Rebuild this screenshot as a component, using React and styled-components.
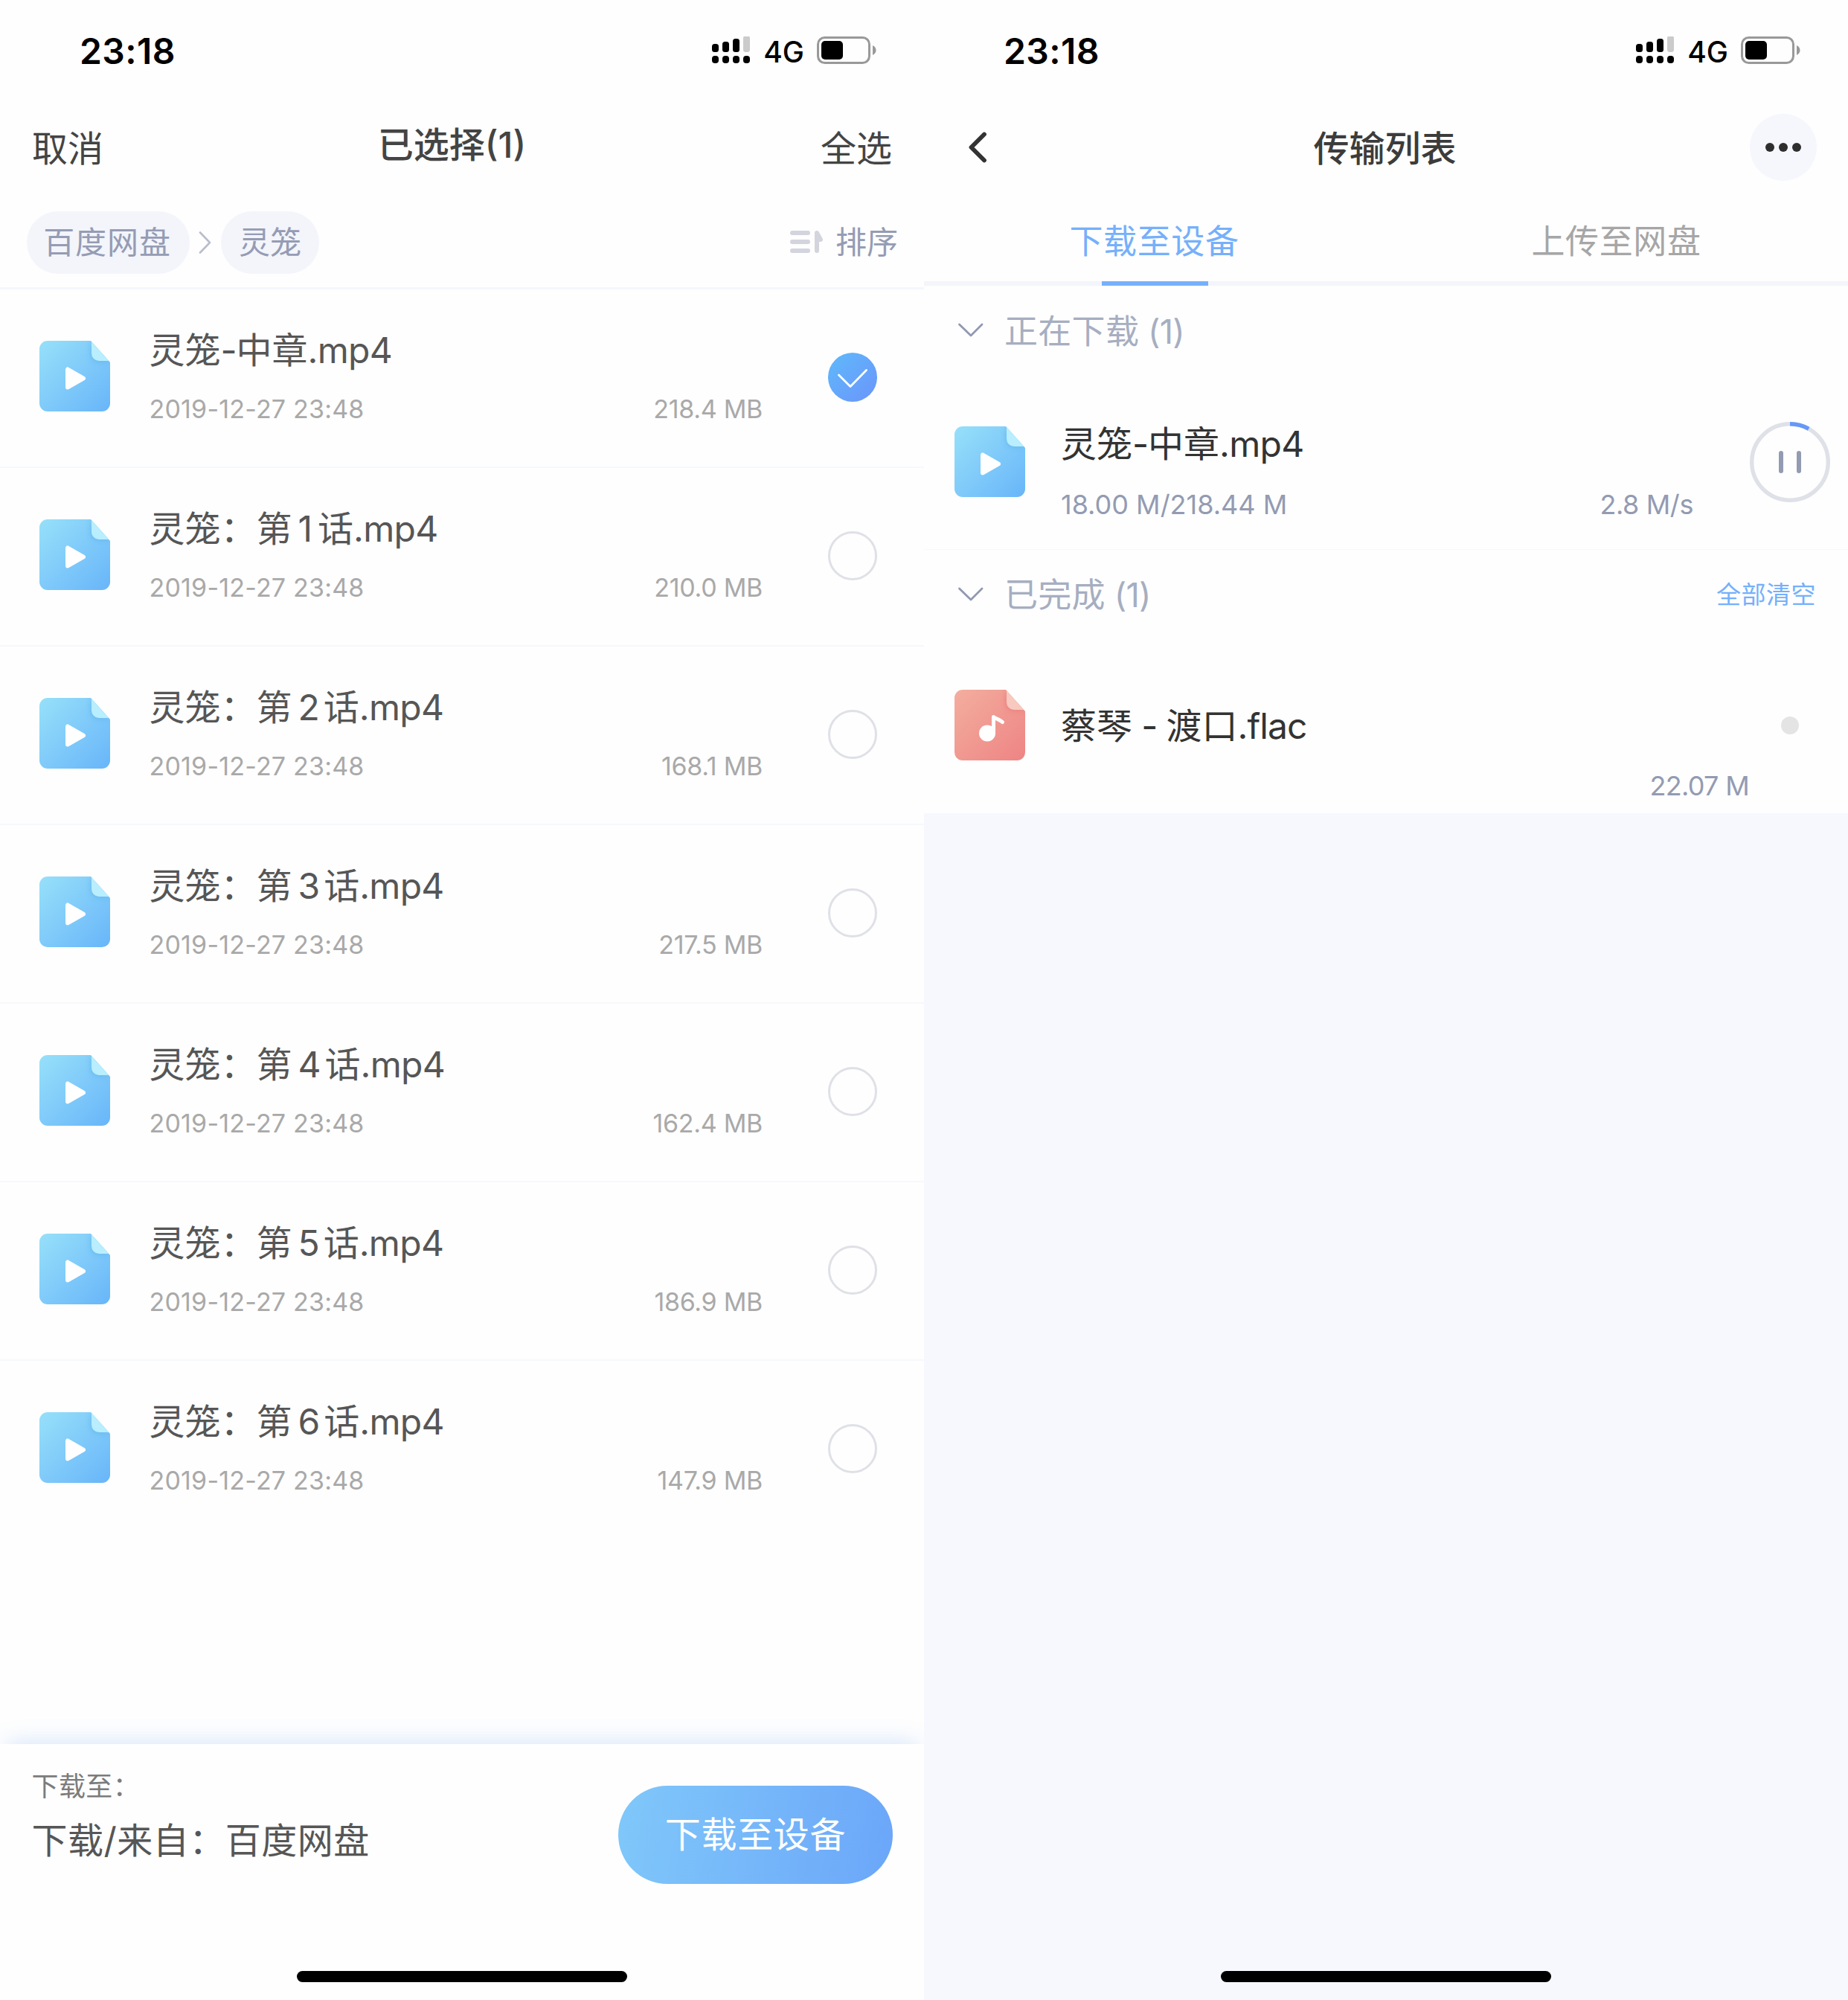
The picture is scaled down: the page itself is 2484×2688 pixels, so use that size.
import React from "react";
import styled, { createGlobalStyle } from "styled-components";

const Global = createGlobalStyle`
  * { box-sizing: border-box; }
  body { margin: 0; background: #fefefe; font-family: Inter, "Noto Sans CJK SC", sans-serif; }
  svg { display: block; flex: none; }
`;

const Screens = styled.div`
  display: flex;
  width: 2484px;
  height: 2688px;
`;
const Phone = styled.section`
  display: flex;
  flex-direction: column;
  width: 1242px;
  height: 2688px;
  overflow: hidden;
  background: ${(p) => p.$bg || "#fefefe"};
`;
const Text = styled.span`
  display: block;
  white-space: pre;
  padding: ${(p) => p.$pad || "0"};
  font-size: ${(p) => p.$size}px;
  line-height: ${(p) => p.$line || Math.round(p.$size * 1.25)}px;
  font-weight: ${(p) => p.$weight || 400};
  letter-spacing: ${(p) => p.$track || 0}px;
  color: ${(p) => p.$color};
`;
const Latin = styled.span`
  letter-spacing: ${(p) => p.$track}px;
`;

const StatusRow = styled.header`
  display: flex;
  justify-content: space-between;
  align-items: flex-start;
  height: 132px;
  padding: 49px 64px 0 107px;
`;
const StatusIcons = styled.div`
  display: flex;
`;
const Carrier = styled(Text)`
  margin: -2px 17px 0 18px;
`;

function StatusBar() {
  return (
    <StatusRow>
      <Text $size={48} $line={40} $weight={600} $track={0.4} $color="#000">23:18</Text>
      <StatusIcons>
        <svg width="51" height="38" viewBox="0 0 51 38">
          <rect x="0" y="10" width="9" height="11" rx="3.5" />
          <rect x="14" y="7" width="9" height="14" rx="3.5" />
          <rect x="28" y="3" width="9" height="18" rx="3.5" />
          <rect x="42" y="-1" width="9" height="22" rx="3.5" fill="#cbcbcb" />
          {[0, 14, 28, 42].map((x) => (
            <rect key={x} x={x} y="26" width="9" height="10" rx="4" />
          ))}
        </svg>
        <Carrier $size={39} $line={46} $weight={500} $color="#000">4G</Carrier>
        <svg width="80" height="40" viewBox="0 0 80 40">
          <rect x="1.5" y="1.5" width="69" height="34" rx="9" fill="none" stroke="#999" strokeWidth="3" />
          <rect x="6" y="6" width="29" height="25" rx="5" />
          <path d="M75 12c6 2.500 6 10.500 0 13z" fill="#999" />
        </svg>
      </StatusIcons>
    </StatusRow>
  );
}

const NavRow = styled.nav`
  display: grid;
  grid-template-columns: 1fr auto 1fr;
  align-items: center;
  height: 132px;
  padding: 0 42px 0 43px;
`;
const NavEnd = styled.div`
  justify-self: end;
`;
const BackSlot = styled.div`
  padding-left: 16px;
`;
const MoreButton = styled.button`
  display: flex;
  justify-content: center;
  align-items: center;
  gap: 6px;
  width: 90px;
  height: 90px;
  padding: 0;
  border: 0;
  border-radius: 50%;
  background: #f5f7fd;
`;
const MoreDot = styled.i`
  width: 12px;
  height: 12px;
  border-radius: 50%;
  background: #2e2e2e;
`;

const CrumbBar = styled.div`
  display: flex;
  align-items: flex-start;
  height: 125px;
  padding: 20px 35px 0 36px;
  border-bottom: 3px solid #f4f7fd;
`;
const Chip = styled.div`
  display: flex;
  align-items: center;
  justify-content: center;
  width: ${(p) => p.$w}px;
  height: 84px;
  border-radius: 42px;
  background: #f3f5fb;
`;
const CrumbArrow = styled.div`
  display: flex;
  justify-content: center;
  width: 42px;
  padding-top: 27px;
`;
const SortButton = styled.div`
  display: flex;
  align-items: center;
  gap: 16px;
  height: 82px;
  margin-left: auto;
`;

const FileRow = styled.article`
  display: flex;
  align-items: flex-start;
  height: 240px;
  padding: 69px 63px 0 53px;
  border-bottom: 2px solid ${(p) => (p.$last ? "transparent" : "#f6f8fd")};
`;
const FileBody = styled.div`
  flex: 1;
  margin: -17px 0 0 52.5px;
`;
const FileMeta = styled.div`
  display: flex;
  justify-content: space-between;
  margin-top: 27px;
  padding-right: 88px;
`;
const Episode = styled.span`
  margin: 0 ${(p) => (p.$narrow ? 7 : 5)}px 0 8px;
`;
const CheckSlot = styled.div`
  padding-top: 16px;
`;
const Radio = styled.div`
  width: 66px;
  height: 66px;
  border: 3px solid #dfe1e7;
  border-radius: 50%;
`;

const BottomBar = styled.footer`
  display: flex;
  flex-direction: column;
  height: 344px;
  margin-top: auto;
  background: #fefefe;
  box-shadow: 0 -10px 30px -10px rgba(70, 140, 240, 0.25);
`;
const BottomRow = styled.div`
  display: flex;
  justify-content: space-between;
  padding: 34px 42px 0 42.5px;
`;
const Target = styled.div`
  display: flex;
  flex-direction: column;
  gap: 20px;
`;
const DownloadButton = styled.button`
  display: flex;
  align-items: center;
  justify-content: center;
  width: 369px;
  height: 132px;
  margin-top: 22px;
  padding: 0;
  border: 0;
  border-radius: 66px;
  font-family: inherit;
  background: linear-gradient(100deg, #80c8fa, #6ba6f9);
`;
const HomeIndicator = styled.div`
  flex: none;
  width: 444px;
  height: 15px;
  margin: auto auto 24px;
  border-radius: 8px;
  background: #000;
`;

const Sheet = styled.div`
  flex: none;
  height: 1093px;
  background: #fefefe;
`;
const Tabs = styled.div`
  display: flex;
  height: 120px;
  border-bottom: 6px solid #f3f5fb;
`;
const Tab = styled.div`
  display: flex;
  flex: 1;
  flex-direction: column;
  align-items: center;
  justify-content: space-between;
  height: 120px;
  padding-top: 33px;
`;
const TabMarker = styled.div`
  width: 143px;
  height: 6px;
  background: #75b0fb;
`;
const SectionHead = styled.div`
  display: flex;
  align-items: center;
  height: 120px;
  padding: 0 43px 0 45px;
`;
const SectionName = styled(Text)`
  margin-left: 27px;
`;
const SectionAction = styled(Text)`
  margin-left: auto;
`;
const Transfer = styled.article`
  display: flex;
  height: 235px;
  padding: 69px 24px 0 41px;
  border-bottom: 1px solid #f9f9fa;
`;
const TransferBody = styled.div`
  flex: 1;
  margin: -6px 0 0 48px;
`;
const TransferMeta = styled.div`
  display: flex;
  justify-content: space-between;
  margin-top: 28px;
  padding-right: 76px;
`;
const ProgressSlot = styled.div`
  margin-top: -6px;
`;
const Finished = styled.article`
  padding: 68px 66px 0 41px;
`;
const FinishedTop = styled.div`
  display: flex;
  align-items: center;
  height: 95px;
`;
const FinishedName = styled(Text)`
  flex: 1;
  margin-left: 48px;
`;
const FinishedDot = styled.i`
  width: 24px;
  height: 24px;
  border-radius: 50%;
  background: #e4e4e4;
`;
const FinishedSize = styled.div`
  display: flex;
  justify-content: flex-end;
  padding: 11px 67px 0 0;
`;

const skins = {
  video: { from: "#97e0fa", to: "#68b5f9", flap: "#b8eefe", shade: "#58aee8" },
  audio: { from: "#f3ae9f", to: "#ee8484", flap: "#f8c9bf", shade: "#e86f70" },
};

function FileIcon({ kind, id }) {
  const s = skins[kind];
  return (
    <svg width="95" height="95" viewBox="0 0 95 95">
      <defs>
        <linearGradient id={`${id}-fill`} x1="0" y1="0" x2="1" y2="1">
          <stop offset="0" stopColor={s.from} />
          <stop offset="1" stopColor={s.to} />
        </linearGradient>
        <filter id={`${id}-blur`} x="-50%" y="-50%" width="200%" height="200%">
          <feGaussianBlur stdDeviation="3.500" />
        </filter>
        <clipPath id={`${id}-clip`}>
          <path d="M11 0H69L95 29V84a11 11 0 0 1-11 11H11A11 11 0 0 1 0 84V11A11 11 0 0 1 11 0z" />
        </clipPath>
      </defs>
      <g clipPath={`url(#${id}-clip)`}>
        <rect width="95" height="95" fill={`url(#${id}-fill)`} />
        <path d="M69 0V19a9 9 0 0 0 9 9H95z" fill={s.shade} opacity="0.55" filter={`url(#${id}-blur)`} />
        <path d="M70 0V17a10 10 0 0 0 10 10H94L95 29V0z" fill={s.flap} />
      </g>
      {kind === "video" ? (
        <path d="M38 38.500L38 62.500L59 50.500z" fill="#fff" stroke="#fff" strokeWidth="6" strokeLinejoin="round" />
      ) : (
        <g>
          <circle cx="44" cy="58.500" r="11" fill="#fff" />
          <path d="M52.500 58V36.500C55 39 61 40 64.500 43.500" fill="none" stroke="#fff" strokeWidth="5" strokeLinecap="round" strokeLinejoin="round" />
        </g>
      )}
    </svg>
  );
}

function Checked() {
  return (
    <svg width="66" height="66" viewBox="0 0 66 66">
      <defs>
        <linearGradient id="check-fill" x1="0.1" y1="0.1" x2="0.9" y2="0.9">
          <stop offset="0" stopColor="#60b6fb" />
          <stop offset="1" stopColor="#6a98fb" />
        </linearGradient>
      </defs>
      <circle cx="33" cy="33" r="33" fill="url(#check-fill)" />
      <path d="M14.500 30L30 45.500L51.500 23.500" fill="none" stroke="#fff" strokeWidth="2.800" strokeLinecap="round" strokeLinejoin="round" />
    </svg>
  );
}

function SectionChevron() {
  return (
    <svg width="36" height="22" viewBox="0 0 36 22">
      <path d="M2.500 3L18 18L33 3" fill="none" stroke="#9198b1" strokeWidth="2.800" strokeLinecap="round" strokeLinejoin="round" />
    </svg>
  );
}

const files = [
  { size: "218.4 MB" },
  { n: 1, size: "210.0 MB" },
  { n: 2, size: "168.1 MB" },
  { n: 3, size: "217.5 MB" },
  { n: 4, size: "162.4 MB" },
  { n: 5, size: "186.9 MB" },
  { n: 6, size: "147.9 MB" },
];

function Picker() {
  return (
    <Phone>
      <StatusBar />
      <NavRow>
        <Text $size={48} $color="#444" $pad="4px 0 0">取消</Text>
        <Text $size={48} $weight={500} $color="#444" $pad="0 28px 7px 0">已选择(1)</Text>
        <NavEnd>
          <Text $size={48} $color="#444" $pad="4px 1px 0 0">全选</Text>
        </NavEnd>
      </NavRow>
      <CrumbBar>
        <Chip $w={219}>
          <Text $size={42} $track={0.9} $color="#959cb4" $pad="0 3px 2px 0">百度网盘</Text>
        </Chip>
        <CrumbArrow>
          <svg width="18" height="30" viewBox="0 0 18 30">
            <path d="M2 1.500L15 15L2 28.500" fill="none" stroke="#b9bdcc" strokeWidth="2.600" strokeLinecap="round" strokeLinejoin="round" />
          </svg>
        </CrumbArrow>
        <Chip $w={132}>
          <Text $size={42} $color="#959cb4" $pad="0 0 2px">灵笼</Text>
        </Chip>
        <SortButton>
          <svg width="45" height="32" viewBox="0 0 45 32" fill="none" stroke="#d3d4dd" strokeWidth="6" strokeLinecap="round" strokeLinejoin="round">
            <path d="M3 4H24M3 16H24M3 28H24M36 28V4L41 13" />
          </svg>
          <Text $size={42} $color="#959cb4">排序</Text>
        </SortButton>
      </CrumbBar>
      {files.map((f, i) => (
        <FileRow key={i} $last={i === files.length - 1}>
          <FileIcon kind="video" id={`file${i}`} />
          <FileBody>
            <Text $size={48} $line={60} $color="#565656">
              {f.n ? (
                <>灵笼：第<Episode $narrow={f.n === 1}>{f.n}</Episode>话</>
              ) : (
                <>灵笼<Latin $track={-1}>-</Latin>中章</>
              )}
              <Latin $track={-0.7}>.mp4</Latin>
            </Text>
            <FileMeta>
              <Text $size={34} $line={44} $track={0.2} $color="#a9a9a9">2019-12-27 23:48</Text>
              <Text $size={34} $line={44} $track={-0.3} $color="#a9a9a9">{f.size}</Text>
            </FileMeta>
          </FileBody>
          <CheckSlot>{i === 0 ? <Checked /> : <Radio />}</CheckSlot>
        </FileRow>
      ))}
      <BottomBar>
        <BottomRow>
          <Target>
            <Text $size={36} $line={46} $track={0.4} $color="#7c7c7c">下载至：</Text>
            <Text $size={48} $line={60} $track={0.5} $color="#565656">下载/来自：百度网盘</Text>
          </Target>
          <DownloadButton>
            <Text $size={48} $track={0.7} $color="#fff">下载至设备</Text>
          </DownloadButton>
        </BottomRow>
        <HomeIndicator />
      </BottomBar>
    </Phone>
  );
}

function Transfers() {
  return (
    <Phone $bg="#f6f8fd">
      <Sheet>
        <StatusBar />
        <NavRow>
          <BackSlot>
            <svg width="26" height="42" viewBox="0 0 26 42">
              <path d="M22 3.500L4.500 21L22 38.500" fill="none" stroke="#333" strokeWidth="5.800" strokeLinecap="round" strokeLinejoin="round" />
            </svg>
          </BackSlot>
          <Text $size={48} $weight={500} $color="#3c3c3c" $pad="3px 4px 0 0">传输列表</Text>
          <NavEnd>
            <MoreButton><MoreDot /><MoreDot /><MoreDot /></MoreButton>
          </NavEnd>
        </NavRow>
        <Tabs>
          <Tab>
            <Text $size={45} $track={0.6} $color="#75b0fb" $pad="0 2px 0 0">下载至设备</Text>
            <TabMarker />
          </Tab>
          <Tab>
            <Text $size={45} $track={0.6} $color="#a6a6a6" $pad="0 2px 0 0">上传至网盘</Text>
          </Tab>
        </Tabs>
        <SectionHead>
          <SectionChevron />
          <SectionName $size={45} $track={0.3} $color="#a6aec1" $pad="4px 0 0">
            正在下载<Latin $track={-0.8}> (1)</Latin>
          </SectionName>
        </SectionHead>
        <Transfer>
          <FileIcon kind="video" id="active" />
          <TransferBody>
            <Text $size={48} $line={60} $color="#333">
              灵笼<Latin $track={-1}>-</Latin>中章<Latin $track={-0.7}>.mp4</Latin>
            </Text>
            <TransferMeta>
              <Text $size={36} $line={46} $color="#939bb2">18.00 M/218.44 M</Text>
              <Text $size={36} $line={46} $track={-0.4} $color="#939bb2">2.8 M/s</Text>
            </TransferMeta>
          </TransferBody>
          <ProgressSlot>
            <svg width="108" height="108" viewBox="0 0 108 108" fill="none">
              <circle cx="54" cy="54" r="51.300" stroke="#dfe1e8" strokeWidth="5.400" />
              <path d="M54 2.700A51.300 51.300 0 0 1 79.200 9.300" stroke="#6598f8" strokeWidth="5.400" />
              <path d="M42 42V66M66 42V66" stroke="#939bb2" strokeWidth="6" strokeLinecap="round" />
            </svg>
          </ProgressSlot>
        </Transfer>
        <SectionHead>
          <SectionChevron />
          <SectionName $size={45} $track={0.3} $color="#a6aec1" $pad="2px 0 0">
            已完成<Latin $track={-0.8}> (1)</Latin>
          </SectionName>
          <SectionAction $size={33} $track={0.5} $color="#75b0fb">全部清空</SectionAction>
        </SectionHead>
        <Finished>
          <FinishedTop>
            <FileIcon kind="audio" id="done" />
            <FinishedName $size={48} $color="#333" $pad="2px 0 0">
              蔡琴<Latin $track={-1.2}> - </Latin>渡口<Latin $track={-0.9}>.flac</Latin>
            </FinishedName>
            <FinishedDot />
          </FinishedTop>
          <FinishedSize>
            <Text $size={36} $line={46} $track={-0.7} $color="#939bb2">22.07 M</Text>
          </FinishedSize>
        </Finished>
      </Sheet>
      <HomeIndicator />
    </Phone>
  );
}

export default function App() {
  return (
    <>
      <Global />
      <Screens>
        <Picker />
        <Transfers />
      </Screens>
    </>
  );
}
